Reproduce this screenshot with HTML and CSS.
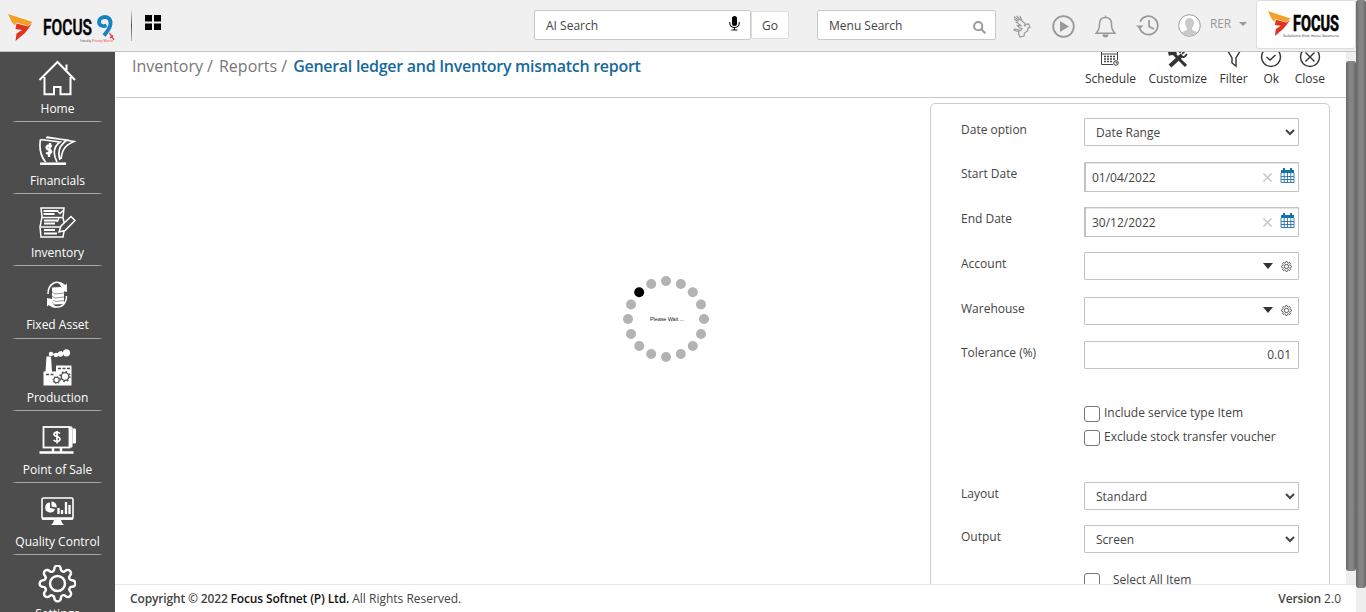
FILE: index.html
```html
<!DOCTYPE html>
<html lang="en">
<head>
<meta charset="utf-8">
<title>Focus 9</title>
<link rel="stylesheet" href="styles.css">
</head>
<body>
<svg class="defs" width="0" height="0">
  <symbol id="gear" viewBox="0 0 24 24"><path d="M19.4 15a1.65 1.65 0 0 0 .33 1.82l.06.06a2 2 0 0 1 0 2.83 2 2 0 0 1-2.83 0l-.06-.06a1.65 1.65 0 0 0-1.82-.33 1.65 1.65 0 0 0-1 1.51V21a2 2 0 0 1-2 2 2 2 0 0 1-2-2v-.09A1.65 1.65 0 0 0 9 19.4a1.65 1.65 0 0 0-1.82.33l-.06.06a2 2 0 0 1-2.83 0 2 2 0 0 1 0-2.83l.06-.06a1.65 1.65 0 0 0 .33-1.82 1.65 1.65 0 0 0-1.51-1H3a2 2 0 0 1-2-2 2 2 0 0 1 2-2h.09A1.65 1.65 0 0 0 4.6 9a1.65 1.65 0 0 0-.33-1.82l-.06-.06a2 2 0 0 1 0-2.83 2 2 0 0 1 2.83 0l.06.06a1.65 1.65 0 0 0 1.82.33H9a1.65 1.65 0 0 0 1-1.51V3a2 2 0 0 1 2-2 2 2 0 0 1 2 2v.09a1.65 1.65 0 0 0 1 1.51 1.65 1.65 0 0 0 1.82-.33l.06-.06a2 2 0 0 1 2.83 0 2 2 0 0 1 0 2.83l-.06.06a1.65 1.65 0 0 0-.33 1.82V9a1.65 1.65 0 0 0 1.51 1H21a2 2 0 0 1 2 2 2 2 0 0 1-2 2h-.09a1.65 1.65 0 0 0-1.51 1z"/><circle cx="12" cy="12" r="4.6"/></symbol>
  <symbol id="calendar" viewBox="0 0 15 16"><path d="M1 2h13v3H1zM3 0h2v3H3zM10 0h2v3h-2z" fill="#1272ad"/><path d="M1 5v9.500h13V5M1 8.500h13M1 11.500h13M4.200 5v9.500M7.500 5v9.500M10.800 5v9.500" fill="none" stroke="#2a75a8" stroke-width=".9"/></symbol>
  <symbol id="bird" viewBox="0 0 25 27"><path d="M0 0 24.500 8 20 12 8 8.500 7 11.500 4 8.500Z" fill="#f4a024"/><path d="M8.500 9.500 20 12.500 24 9.500 20.500 14.500 17 19 7.500 27 8.500 19.500 14 16 7.500 15Z" fill="#e1341e"/></symbol>
</svg>

<div class="window">
<div class="app">
  <header class="topbar">
    <svg class="brand" viewBox="0 0 120 44" width="120" height="44">
      <use href="#bird" x="8" y="12" width="25" height="27"/>
      <text x="43" y="33" class="word" textLength="49" lengthAdjust="spacingAndGlyphs">FOCUS</text>
      <path d="M106.500 23.500c-3.500 1.500-7.500 0-7.500-3.500s3-5 6-5c4 0 6 3 5.500 7-.5 4.500-3 7-6.500 11.500" fill="none" stroke="#1482c5" stroke-width="3.800"/>
      <path d="m109.500 31 4.500 7M110 36l3-2.500" stroke="#d33" stroke-width="1.300"/>
      <text x="80" y="40" class="tiny" textLength="11" lengthAdjust="spacingAndGlyphs">Powered by</text>
      <text x="92" y="40" class="tiny red" textLength="21" lengthAdjust="spacingAndGlyphs">Priority Matrix</text>
    </svg>
    <span class="brand-rule"></span>
    <svg class="tiles" width="16" height="15"><path d="M0 0h7v6.500H0zM9 0h7v6.500H9zM0 8.500h7V15H0zM9 8.500h7V15H9z"/></svg>
    <div class="search ai">AI Search
      <svg width="11" height="15" viewBox="0 0 11 15"><rect x="3" y="0" width="5" height="10" rx="2.500"/><path d="M.8 6v1.500a4.700 4 0 0 0 9.400 0V6M5.500 11.500V14M2.500 14h6" fill="none" stroke="#111" stroke-width="1.100"/></svg>
    </div>
    <button class="go">Go</button>
    <div class="search menu">Menu Search
      <svg width="13" height="13" viewBox="0 0 13 13" fill="none" stroke="#999" stroke-width="2"><circle cx="5.200" cy="5.200" r="4.100"/><path d="m8.300 8.300 4 4"/></svg>
    </div>
    <div class="tools">
      <svg width="18" height="23" viewBox="0 0 18 23" fill="none" stroke="#999" stroke-width="1.200"><path d="M1 1.500 6 5.500M3.500.8 8 5.500M7 1l2 5M1 4l4 2.500M2.500 7l3.500 1.500M9 6l3 2.500.5 3M5 8.500l3.500 2.500-4-.5 2 2.500 2.500.500-1.500 2-5.500-1.500-1 1 2 1 3 .5-.5 2.500 1.500 3 4-1 .5-3 3-2 .5-3 2-.5-1.500-3.500-3 .5-1.500 1.500"/></svg>
      <svg width="23" height="23" viewBox="0 0 23 23"><circle cx="11.500" cy="11.500" r="10.300" fill="none" stroke="#999" stroke-width="1.800"/><path d="M8 6v11l9-5.500z" fill="#999"/></svg>
      <svg width="21" height="23" viewBox="0 0 21 23" fill="none" stroke="#999" stroke-width="1.500"><path d="M10.500 2.500C6 2.500 4.500 6 4.500 9c0 5-1 7-3.500 9.200h19C17.500 16 16.500 14 16.500 9c0-3-1.500-6.500-6-6.500zM10.500.5v2"/><path d="M8.300 19.500a2.200 2.200 0 0 0 4.400 0" fill="#999"/></svg>
      <svg width="23" height="22" viewBox="0 0 23 22" fill="none" stroke="#999" stroke-width="1.700"><path d="M3.500 12a9.200 9.200 0 1 0 .6-5.200M13 5v6.500l5 2.500"/><path d="M0 10.500 7.500 10.500 3.800 14z" fill="#999" stroke="none"/></svg>
      <svg width="23" height="23" viewBox="0 0 23 23"><circle cx="11.500" cy="11.500" r="10.800" fill="#fff" stroke="#999"/><path d="M4 19c1-2 3-2 5-3v-2C5.500 10 7 4 11.500 4S17.500 10 14 14v2c2 1 4 1 5 3q-7.500 5.500-15 0z" fill="#c9c9c9"/></svg>
      <span class="user">RER</span><i class="caret"></i>
    </div>
    <div class="company">
      <svg width="98" height="46" viewBox="0 0 98 46">
        <use href="#bird" x="11" y="10" width="23" height="25"/>
        <text x="36" y="30" class="word heavy" textLength="46" lengthAdjust="spacingAndGlyphs">FOCUS</text>
        <text x="26" y="35.500" class="tiny" textLength="56" lengthAdjust="spacingAndGlyphs">Solutions that move business</text>
      </svg>
    </div>
  </header>

  <div class="middle">
    <nav class="side">
      <a class="item first"><svg viewBox="0 0 38 38" fill="none" stroke="#fff" stroke-width="2"><path d="M1.500 20 19.500 2 37 20M28.500 10V4.500M6.500 17v17.300H16V27h6.500v7.300H32.500V17"/></svg>Home</a>
      <a class="item"><svg viewBox="0 0 38 38" fill="none" stroke="#fff" stroke-width="1.700"><path d="M2.500 7.500 22 10C15 15 15 23 19 30M2.500 7.500C1 16 2 23 7.500 30M8 5.500 29 8C20 14 20 22 22 28M9 5 36 9.500C25 14 24 20 23 27"/><path d="M2 31.700h26" stroke-width="2.500"/><path d="M14 14c-6-2-7 3-3 3.800s2 5-3 3M12 11l-1 14" stroke-width="2.400"/></svg>Financials</a>
      <a class="item"><svg viewBox="0 0 38 38" fill="none" stroke="#fff" stroke-width="1.500"><path d="M3 4h23l-1 10 2 8-2 11H3L2 23l2-10zM3.500 13.500H25M3 23h19" /><path d="M5.500 7h15M5.500 10h11M6 16.500h13M6 19.500h11M6 26h11M6 29.500h13" stroke-width="1.800"/><path d="m20 8 2 1.500 3-3M21 14l-2 4"/><path d="m21 28 2-6L33 12.500l4 4L27 26.500z" fill="#4d4d4d"/></svg>Inventory</a>
      <a class="item"><svg viewBox="0 0 38 38" fill="none" stroke="#fff"><path d="M14 11.500 23 11 26 15v13l-10 .5-2-3z" fill="#fff" stroke="none"/><path d="m14 16 3 2 9-1M14 20l3 2 9-1M15 24l3 1.500 8-1" stroke="#999"/><path d="M10 18C10 8 18 3 26 9" stroke-width="1.500"/><path d="M19 6c4 0 6 1 8 3l2-1.500V16l-7-1.500 2-2C23 9 20 7 19 6zM19 32c-4 0-6-1-8-3l-2 1.500V22l7 1.500-2 2C15 29 18 31 19 32z" fill="#fff" stroke="none"/><path d="M28.500 20C28.500 29 21 34 14 29" stroke-width="1.500"/></svg>Fixed Asset</a>
      <a class="item"><svg viewBox="0 0 38 38"><path d="M5.500 22.500h2l1-15h4.500l1 15h4v-6h15.500v20h-28z" fill="#fff"/><g fill="#fff"><circle cx="28.500" cy="3.800" r="3.600"/><circle cx="22.500" cy="5" r="2.700"/><circle cx="18" cy="6" r="2.300"/><circle cx="13" cy="5" r="2.300"/><path d="M12 4.500 18 5l6-3v4l-6 1z"/></g><path d="M20 19.500h12M8 25.500h9" stroke="#4d4d4d" stroke-width="1.300" stroke-dasharray="3 1.500"/><g fill="none" stroke="#4d4d4d"><circle cx="27" cy="27.500" r="3.800" stroke-width="1.300"/><circle cx="27" cy="27.500" r="5" stroke-dasharray="1.570 2.360" stroke-width="1.400"/><circle cx="18.500" cy="31" r="2.700" stroke-width="1.100"/><circle cx="18.500" cy="31" r="3.700" stroke-dasharray="1.160 1.740"/></g></svg>Production</a>
      <a class="item"><svg viewBox="0 0 38 38" fill="none" stroke="#fff"><rect x="5.500" y="6" width="26" height="20.500" stroke-width="1.800"/><path d="M32 6h2v20h-2M34.500 8h3v14h-3" fill="#fff"/><path d="M15 27v3.500M23 27v3.500M1.500 31.500h34" stroke-width="2.500"/><path d="M22 12.500c-2-2-6-1.500-6 1s6 1.500 6 4.500-4.500 3-6.500 1M19 10v12.500" stroke-width="1.700"/></svg>Point of Sale</a>
      <a class="item"><svg viewBox="0 0 38 38" fill="none" stroke="#fff"><rect x="4" y="5" width="31" height="21" rx="1.500" stroke-width="1.600"/><path d="M4 25.500h31" stroke-width="2.500"/><path d="M16 27h7l1 3 2 2H13l2-2z" fill="#fff" stroke="none"/><path d="M12 9.500A5 5 0 1 0 17 16l-5-1zM13.500 8.500v5l5 1a5 5 0 0 0-5-6z" fill="#fff" stroke="none"/><path d="M20.500 21v-6M24 21v-4M28 21V9M31.500 21v-9" stroke-width="2.300"/></svg>Quality Control</a>
      <a class="item"><svg viewBox="0 0 38 38" fill="none" stroke="#fff" stroke-width="1.500"><use href="#gear" x="0" y="-1" width="39" height="39"/></svg>Settings</a>
    </nav>

    <main class="main">
      <div class="viewport">
        <div class="page">
          <div class="page-head">
            <div class="crumbs"><span>Inventory /</span><span>Reports /</span><b>General ledger and Inventory mismatch report</b></div>
            <div class="actions">
              <div class="action"><svg width="20" height="22" viewBox="0 0 20 22" fill="none" stroke="#444"><path d="M1.500 3h16v11M1.500 3v15.500H13M1.500 8h16"/><path d="M4 10.500h12M4 13h12M4 15.500h8" stroke-width="1.500" stroke-dasharray="2 1"/><circle cx="16" cy="17" r="2.300" fill="#fff"/><path d="M16 15.500V17h1.500"/></svg>Schedule</div>
              <div class="action"><svg width="20" height="22" viewBox="0 0 20 22" fill="none" stroke="#333" stroke-width="3"><path d="m2 4 16 16M1 3l4-1 2 5-5 1z"/><path d="M2 20 14 9" stroke-width="4"/><path d="M13 10c2 2 4 1 6-2M12 7c0-2 2-4 4-5M14 8l4-4" stroke-width="1.700"/></svg>Customize</div>
              <div class="action"><svg width="16" height="22" viewBox="0 0 16 22" fill="none" stroke="#333" stroke-width="1.400"><path d="M1 3.500h14L10 12v8l-4-3v-5z"/></svg>Filter</div>
              <div class="action"><svg width="22" height="22" viewBox="0 0 22 22" fill="none" stroke="#333" stroke-width="1.400"><circle cx="11" cy="11" r="9.500"/><path d="m6.500 11 3.500 3 5.500-5"/></svg>Ok</div>
              <div class="action"><svg width="22" height="22" viewBox="0 0 22 22" fill="none" stroke="#333" stroke-width="1.400"><circle cx="11" cy="11" r="9.500"/><path d="m6.500 6.500 9 9M15.500 6.500l-9 9"/></svg>Close</div>
            </div>
          </div>
          <form class="panel">
            <div class="row"><label>Date option</label><select class="field"><option>Date Range</option></select></div>
            <div class="row g16"><label>Start Date</label><div class="field date">01/04/2022<svg class="x" width="9" height="9" stroke="#c8c8c8" stroke-width="1.500"><path d="m.5.5 8 8M8.500.5l-8 8"/></svg><svg width="15" height="16"><use href="#calendar"/></svg></div></div>
            <div class="row g15"><label>End Date</label><div class="field date">30/12/2022<svg class="x" width="9" height="9" stroke="#c8c8c8" stroke-width="1.500"><path d="m.5.5 8 8M8.500.5l-8 8"/></svg><svg width="15" height="16"><use href="#calendar"/></svg></div></div>
            <div class="row g15"><label>Account</label><div class="field pick"><i></i><svg width="11" height="11" fill="none" stroke="#444" stroke-width="2"><use href="#gear"/></svg></div></div>
            <div class="row g17"><label>Warehouse</label><div class="field pick house"><i></i><svg width="11" height="11" fill="none" stroke="#444" stroke-width="2"><use href="#gear"/></svg></div></div>
            <div class="row g16"><label>Tolerance (%)</label><div class="field num">0.01</div></div>
            <div class="check top"><span class="box"></span>Include service type Item</div>
            <div class="check"><span class="box"></span>Exclude stock transfer voucher</div>
            <div class="row g29"><label>Layout</label><select class="field"><option>Standard</option></select></div>
            <div class="row g15"><label>Output</label><select class="field"><option>Screen</option></select></div>
            <div class="check all"><span class="box"></span>Select All Item</div>
          </form>
        </div>
        <div class="scroll inner"><span></span></div>
      </div>
      <footer class="foot"><div><b>Copyright © 2022 <strong>Focus Softnet (P) Ltd.</strong></b> All Rights Reserved.</div><div><b>Version</b> 2.0</div></footer>
    </main>
  </div>
</div>
<div class="scroll outer"><span></span></div>
</div>

<svg class="wait" width="90" height="90" viewBox="-45 -45 90 90">
  <g fill="#b3b3b3"><circle cx="0" cy="-38" r="5"/><circle cx="14.800" cy="-35" r="5"/><circle cx="26.800" cy="-26.800" r="5"/><circle cx="35" cy="-14.500" r="5"/><circle cx="38" cy="0" r="5"/><circle cx="35" cy="15" r="5"/><circle cx="26.800" cy="27" r="5"/><circle cx="14.800" cy="35" r="5"/><circle cx="0" cy="38" r="5"/><circle cx="-14.800" cy="35" r="5"/><circle cx="-26.800" cy="27" r="5"/><circle cx="-35" cy="15" r="5"/><circle cx="-38" cy="0" r="5"/><circle cx="-35" cy="-14.500" r="5"/><circle cx="-14.800" cy="-35" r="5"/></g>
  <circle cx="-26.800" cy="-26.800" r="5"/>
  <text x="-16" y="1.500" textLength="34">Please Wait ...</text>
</svg>
</body>
</html>
```
FILE: styles.css
```css
* { box-sizing: border-box; }
body { margin: 0; font: 12px/16px "Open Sans", sans-serif; color: #444; background: #fff; overflow: hidden; }
svg { display: block; flex: none; }
.defs { position: absolute; }
.window { display: flex; height: 612px; }
.app { width: 1356px; display: flex; flex-direction: column; }

.topbar { height: 52px; flex: none; display: flex; align-items: flex-start; background: #f0f0f0; border-bottom: 1px solid #c4c4c4; }
.brand { margin-top: 2px; }
.brand .word, .company .word { font: 500 22px Roboto, sans-serif; fill: #000; }
.brand .word { stroke: #000; stroke-width: .5px; }
.company .heavy { font-weight: 700; stroke: #000; stroke-width: .6px; }
.tiny { font: 4px "Open Sans", sans-serif; fill: #333; }
.tiny.red { fill: #e33; }
.brand-rule { width: 1px; height: 31px; margin: 10px 0 0 11px; background: linear-gradient(#ddd, #555 50%, #bbb); }
.tiles { margin: 15px 0 0 13px; }
.search { display: flex; justify-content: space-between; align-items: center; height: 30px; margin-top: 10px; padding: 1px 9px 0 11px; background: #fff; border: 1px solid #c8c8c8; border-radius: 2px; }
.ai { width: 217px; margin-left: 373px; padding-right: 10px; }
.ai svg { margin-top: -4px; }
.go { width: 38px; height: 28px; margin: 11px 0 0; padding: 0; font: 12px "Open Sans", sans-serif; color: #444; background: #fff; border: 1px solid #ddd; border-radius: 2px; }
.menu { width: 179px; margin-left: 28px; }
.menu svg { margin-top: 3px; }
.tools { display: flex; align-items: center; margin: 14px 0 0 17px; height: 24px; color: #999; }
.tools svg:nth-child(2) { margin-left: 21px; }
.tools svg:nth-child(3) { margin-left: 20px; }
.tools svg:nth-child(4) { margin-left: 20px; }
.tools svg:nth-child(5) { margin: -2px 0 0 19px; }
.user { margin: -4px 0 0 9px; width: 22px; letter-spacing: -.2px; }
.caret { width: 0; margin: -4px 0 0 7px; border: 4px solid transparent; border-top-color: #999; border-bottom: 0; }
.company { width: 100px; height: 49px; margin: 0 0 0 auto; background: #fff; border: 1px solid #ddd; border-radius: 3px; }

.middle { flex: 1; min-height: 0; display: flex; }
.side { width: 115px; flex: none; overflow: hidden; background: #4d4d4d; color: #fff; }
.item { position: relative; display: flex; flex-direction: column; align-items: center; height: 72.200px; padding-top: 10px; line-height: 17px; }
.item.first { height: 70px; padding-top: 8px; }
.item::after { content: ""; position: absolute; left: 13px; right: 13px; bottom: 0; height: 1px; background: linear-gradient(90deg, #777, #aaa 5% 95%, #777); }
.item svg { width: 38px; height: 38px; margin: 0 1px 2px 0; }

.main { flex: 1; display: flex; flex-direction: column; min-width: 0; }
.viewport { height: 532px; display: flex; overflow: hidden; }
.page { flex: 1; display: flex; flex-direction: column; }
.page-head { height: 46px; margin-left: 1px; flex: none; display: flex; justify-content: space-between; border-bottom: 1px solid #c8c8c8; padding: 0 21px 0 16px; }
.crumbs { display: flex; gap: 6px; margin-top: 3px; font-size: 16px; line-height: 22px; color: #777; white-space: nowrap; }
.crumbs b { margin-left: 0; font-weight: 600; color: #17699b; letter-spacing: -.28px; }
.actions { display: flex; gap: 12.500px; margin-top: -6px; }
.action { display: flex; flex-direction: column; align-items: center; line-height: 16px; color: #333; }
.action svg { margin-bottom: 3px; }

.panel { width: 400px; height: 520px; flex: none; margin: 5px 16px 0 auto; padding: 14px 30px 0; border: 1px solid #ccc; border-radius: 5px; }
.row { display: grid; grid-template-columns: 123px 215px; align-items: start; }
.row label { margin-top: 4px; line-height: 16px; }
.g15 { margin-top: 15px; } .g16 { margin-top: 16px; } .g17 { margin-top: 17px; } .g29 { margin-top: 29px; }
.field { width: 215px; height: 28px; margin: 0; border: 1px solid #c2c2c2; border-radius: 1px; background: #fff; font: 12px "Open Sans", sans-serif; color: #444; }
select.field { padding: 0 0 0 7px; }
.date, .pick, .num { display: flex; align-items: center; }
.date { height: 30px; padding: 0 3px 0 6px; border-left-width: 2px; box-shadow: inset 0 1px #e4e4e4; }
.date svg { margin-top: -2px; }
.date .x { margin: 1px 8px 0 auto; }
.pick { justify-content: flex-end; padding-right: 6px; }
.pick i { margin-right: 8px; border: 5px solid transparent; border-top: 6px solid #333; border-bottom: 0; }
.house { padding-bottom: 2px; }
.num { justify-content: flex-end; padding: 0 7px 1px 0; }
.check { display: flex; margin-left: 123px; height: 24px; line-height: 15px; gap: 4px; }
.check.top { margin-top: 36px; }
.box { width: 16px; height: 16px; margin-top: 1px; flex: none; border: 1px solid #767676; border-radius: 3px; background: #fff; }
.check.all { margin-top: 19px; gap: 13px; }

.foot { height: 28px; display: flex; justify-content: space-between; padding: 5px 15px 0 15px; line-height: 18px; border-top: 1px solid #e8e8e8; }
.foot b { font-weight: 600; letter-spacing: -.15px; }
.foot strong { font-weight: 600; color: #111; }

.scroll { width: 10px; flex: none; background: #eee; }
.scroll span { display: block; border-radius: 3px; background: linear-gradient(90deg, #686868, #858585 35% 65%, #686868); }
.inner { padding-top: 9px; } .inner span { height: 510px; }
.outer span { height: 588px; }

/* Loading indicator floats above the page */
.wait { position: absolute; left: 621px; top: 274px; }
.wait text { font: 5.500px "Liberation Sans", sans-serif; fill: #222; }
```
